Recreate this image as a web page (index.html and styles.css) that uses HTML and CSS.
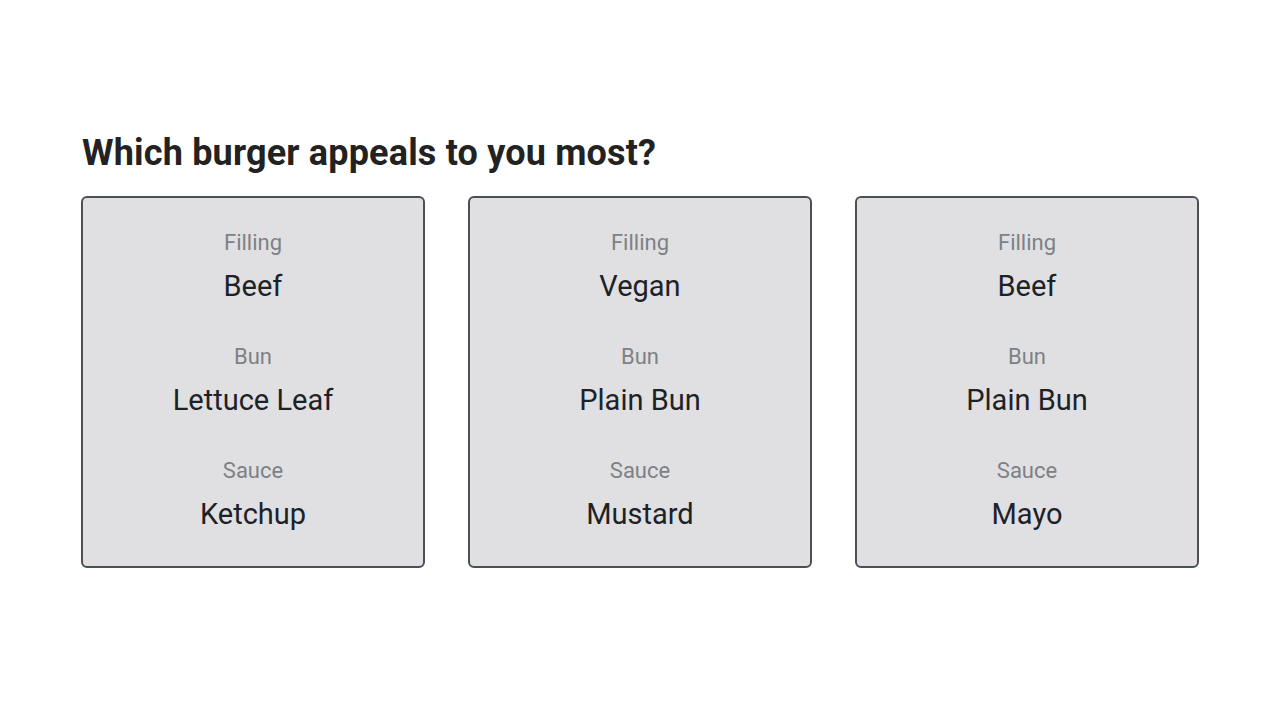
FILE: index.html
```html
<!DOCTYPE html>
<html lang="en">
<head>
<meta charset="utf-8">
<title>Burger survey</title>
<link rel="stylesheet" href="styles.css">
</head>
<body>
<main class="page">
  <h1 class="title">Which burger appeals to you most?</h1>
  <div class="cards">
    <div class="card">
      <div class="group"><div class="label">Filling</div><div class="value">Beef</div></div>
      <div class="group"><div class="label">Bun</div><div class="value">Lettuce Leaf</div></div>
      <div class="group"><div class="label">Sauce</div><div class="value">Ketchup</div></div>
    </div>
    <div class="card">
      <div class="group"><div class="label">Filling</div><div class="value">Vegan</div></div>
      <div class="group"><div class="label">Bun</div><div class="value">Plain Bun</div></div>
      <div class="group"><div class="label">Sauce</div><div class="value">Mustard</div></div>
    </div>
    <div class="card">
      <div class="group"><div class="label">Filling</div><div class="value">Beef</div></div>
      <div class="group"><div class="label">Bun</div><div class="value">Plain Bun</div></div>
      <div class="group"><div class="label">Sauce</div><div class="value">Mayo</div></div>
    </div>
  </div>
</main>
</body>
</html>
```
FILE: styles.css
```css
html, body {
  margin: 0;
  padding: 0;
  background: #ffffff;
}
body {
  font-family: Roboto, "Liberation Sans", sans-serif;
  width: 1280px;
  height: 720px;
  overflow: hidden;
}
.page {
  padding: 135px 81px 0 81px;
}
.title {
  margin: 0 0 25px 1px;
  font-size: 36px;
  line-height: 36px;
  font-weight: 700;
  letter-spacing: 0.18px;
  color: #222222;
}
.cards {
  display: grid;
  grid-template-columns: repeat(3, 1fr);
  gap: 43px;
}
.card {
  background: #e0e0e2;
  border: 2px solid #4a5156;
  border-radius: 6px;
  height: 372px;
  box-sizing: border-box;
  padding-top: 33px;
  display: flex;
  flex-direction: column;
  align-items: center;
  gap: 43px;
}
.group {
  display: flex;
  flex-direction: column;
  align-items: center;
  gap: 15px;
}
.label {
  font-size: 22px;
  line-height: 24px;
  color: #7d8185;
}
.value {
  font-size: 29px;
  line-height: 32px;
  color: #1d2227;
}
```
